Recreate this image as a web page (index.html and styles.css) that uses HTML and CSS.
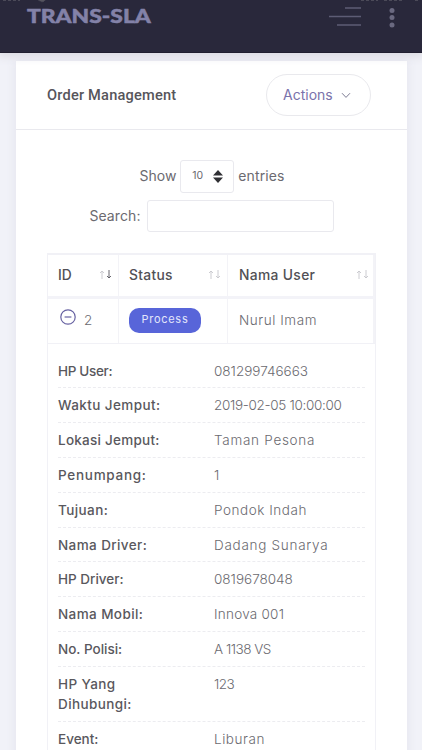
FILE: index.html
```
<!DOCTYPE html>
<html lang="id">
<head>
<meta charset="utf-8">
<meta name="viewport" content="width=device-width, initial-scale=1">
<title>Order Management</title>
<link rel="stylesheet" href="styles.css">
</head>
<body>
<header class="topbar">
  <div class="brand">TRANS-SLA</div>
  <svg class="menu" width="34" height="22" viewBox="0 0 34 22"><path d="M17 3H33M1 11.5H33M9 20H33"/></svg>
  <svg class="more" width="8" height="22" viewBox="0 0 8 22"><circle cx="4" cy="3.5" r="2.5"/><circle cx="4" cy="10.5" r="2.5"/><circle cx="4" cy="18" r="2.5"/></svg>
  <svg class="status-edge" width="422" height="4" viewBox="0 0 422 4"><circle cx="42" cy="-3" r="4.7"/><path d="M3 .5H20M361 .5H378M384 .5H402M415 .5H418"/></svg>
</header>
<main class="card">
  <div class="card-head">
    <h1>Order Management</h1>
    <button class="actions"><span>Actions</span><svg width="10" height="7" viewBox="0 0 10 7"><path d="M1 1.2L5 5.4L9 1.2"/></svg></button>
  </div>
  <div class="card-body">
    <div class="length"><span class="show">Show</span>
      <div class="select"><span>10</span><svg width="10" height="13" viewBox="0 0 10 13"><path d="M0 5.5L5 0L10 5.5ZM0 7.5H10L5 13Z"/></svg></div>
      <span class="entries">entries</span></div>
    <label class="search"><span>Search:</span><input type="text"></label>
    <div class="table">
      <div class="row head">
        <div class="cell"><span class="t-id">ID</span><svg class="sort" width="13" height="9" viewBox="0 0 13 9"><path class="dim" d="M3 9V1M1 3L3 1L5 3"/><path class="on" d="M10 0V8M8 6L10 8L12 6"/></svg></div>
        <div class="cell"><span class="t-status">Status</span><svg class="sort" width="13" height="9" viewBox="0 0 13 9"><path class="dim" d="M3 9V1M1 3L3 1L5 3M10 0V8M8 6L10 8L12 6"/></svg></div>
        <div class="cell"><span class="t-nama">Nama User</span><svg class="sort" width="13" height="9" viewBox="0 0 13 9"><path class="dim" d="M3 9V1M1 3L3 1L5 3M10 0V8M8 6L10 8L12 6"/></svg></div>
      </div>
      <div class="row data">
        <div class="cell"><svg class="collapse" width="16" height="16" viewBox="0 0 16 16"><circle cx="8" cy="8" r="7.2"/><path d="M4.6 8H11.4"/></svg><span>2</span></div>
        <div class="cell"><span class="badge">Process</span></div>
        <div class="cell"><span class="wider">Nurul Imam</span></div>
      </div>
      <dl class="details">
        <div class="item"><dt class="tight">HP User:</dt><dd>081299746663</dd></div>
        <div class="item"><dt class="wide">Waktu Jemput:</dt><dd class="tight">2019-02-05 10:00:00</dd></div>
        <div class="item"><dt class="loose">Lokasi Jemput:</dt><dd class="widest">Taman Pesona</dd></div>
        <div class="item"><dt class="widest">Penumpang:</dt><dd>1</dd></div>
        <div class="item"><dt class="wide">Tujuan:</dt><dd class="wider">Pondok Indah</dd></div>
        <div class="item"><dt class="wide">Nama Driver:</dt><dd class="widest">Dadang Sunarya</dd></div>
        <div class="item"><dt>HP Driver:</dt><dd>0819678048</dd></div>
        <div class="item"><dt class="wide">Nama Mobil:</dt><dd class="loose">Innova 001</dd></div>
        <div class="item"><dt>No. Polisi:</dt><dd class="tighter">A 1138 VS</dd></div>
        <div class="item"><dt class="wide">HP Yang<br>Dihubungi:</dt><dd class="tighter">123</dd></div>
        <div class="item"><dt>Event:</dt><dd class="wider">Liburan</dd></div>
      </dl>
    </div>
  </div>
</main>
</body>
</html>
```
FILE: styles.css
```
* { box-sizing: border-box; }
html, body { height: 100%; overflow: hidden; }
body { margin: 0; background: #f1f2f8; color: #6b6a70; font: 300 13.5px/20px Inter, "Liberation Sans", sans-serif; }
svg { display: block; flex: none; fill: none; }
.topbar { position: relative; height: 53px; background: #29283b; border-bottom: 1px solid #211f30; display: flex; align-items: flex-start; padding: 5px 26px 0 27px; box-shadow: 0 1px 9px 2px #d9d8e0; }
.brand { width: 124px; font: 900 19.5px/22px Lato, sans-serif; color: #8382a8; -webkit-text-stroke: .5px #8382a8; transform: scaleX(1.17); transform-origin: left; white-space: nowrap; }
.menu { margin-left: 177px; margin-top: 0; stroke: #5d5c75; stroke-width: 1.4; }
.more { margin-left: auto; margin-top: 2px; fill: #6a6980; }
.status-edge { position: absolute; left: 0; top: 0; fill: #55545e; stroke: #4b4a58; stroke-dasharray: 3 2; }
.card { margin: 8px 15px 0 16px; height: 700px; background: #fff; box-shadow: 0 0 9px 1px #e5e5ee; }
.card-head { height: 69px; border-bottom: 1px solid #e9e9ee; display: flex; align-items: center; justify-content: space-between; padding: 0 36px 0 31px; }
h1 { margin: 0; font: 500 14.6px/20px Roboto, sans-serif; letter-spacing: .2px; color: #56555b; white-space: nowrap; }
.actions { width: 105px; height: 42px; margin-top: 0; border: 1px solid #e9e9ed; border-radius: 21px; background: #fff; display: flex; align-items: center; gap: 8px; padding: 0 0 0 16px; font: 400 14px/20px Inter, sans-serif; color: #7a72ab; }
.actions svg { stroke: #7c7b93; stroke-width: 1; }
.card-body { padding: 29px 31px 0 31px; }
.length { height: 34px; display: flex; align-items: center; justify-content: center; font-size: 14px; font-weight: 400; padding-left: 1px; }
.entries { letter-spacing: .1px; }
.select { width: 54px; height: 33px; border: 1px solid #e9e9ee; border-radius: 3px; margin: 0 4px; display: flex; align-items: center; padding: 0 10px 0 11px; justify-content: space-between; font-size: 10.5px; }
.select svg { fill: #303034; }
.search { margin-top: 6px; height: 33px; display: flex; align-items: center; justify-content: center; font-size: 14px; font-weight: 400; gap: 6px; }
.search span { letter-spacing: .1px; }
.search input { width: 187px; height: 32px; border: 1px solid #e9e9ee; border-radius: 3px; background: #fff; padding: 0; }
.table { margin-top: 21px; border: 1px solid #f1f1f6; border-top: 2px solid #f1f1f6; height: 510px; }
.row { display: grid; grid-template-columns: 71px 109px 1fr; }
.cell { display: flex; align-items: center; border-right: 1px solid #f3f3f7; padding: 0 6px 0 10px; white-space: nowrap; }
.cell:last-child { padding-left: 11px; padding-right: 4px; border-right-width: 2px; }
.head { height: 44px; border-bottom: 3px solid #f3f3f8; color: #515055; font-weight: 500; font-size: 13.8px; }
.head span { margin-top: -2px; }
.t-status { letter-spacing: .3px; }
.t-nama { letter-spacing: .35px; }
.sort { margin: -3px 0 0 auto; stroke-width: .9; }
.dim { stroke: #c6c6cc; }
.on { stroke: #57565e; }
.data { height: 45px; border-bottom: 1px solid #f1f1f6; }
.data span { position: relative; top: -1px; }
.collapse { stroke: #6762a2; stroke-width: 1.2; margin: -9px 8px 0 2px; }
.badge { width: 72px; height: 25px; border-radius: 10px; background: #5865d9; color: #e3e5fb; font-size: 11px; font-weight: 400; line-height: 23px; text-align: center; letter-spacing: .7px; }
.details { margin: 0; padding: 9.7px 10px 0; }
.item { min-height: 34.8px; padding: 6.9px 0; border-bottom: 1px dashed #ececf0; display: grid; grid-template-columns: 156px 1fr; }
dt { font-weight: 500; color: #59585d; }
dd { margin: 0; white-space: nowrap; }
.tighter { letter-spacing: -.5px; }
.tight { letter-spacing: -.32px; }
.loose { letter-spacing: .25px; }
.wide { letter-spacing: .4px; }
.wider { letter-spacing: .55px; }
.widest { letter-spacing: .72px; }
```
